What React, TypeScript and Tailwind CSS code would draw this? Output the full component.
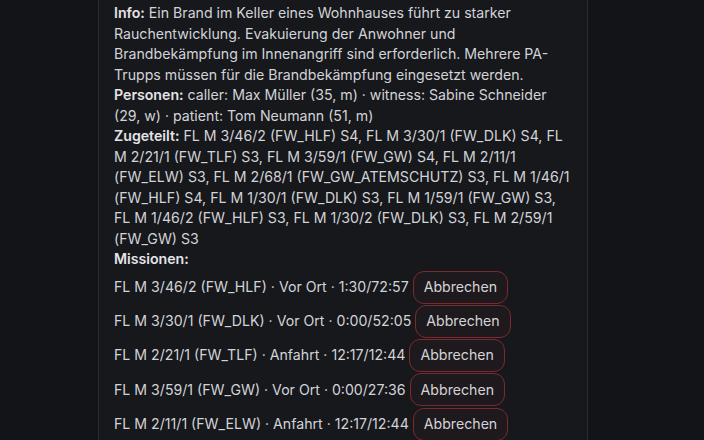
import React from 'react';

const missions = [
  { unit: 'FL M 3/46/2 (FW_HLF)', status: 'Vor Ort', time: '1:30/72:57' },
  { unit: 'FL M 3/30/1 (FW_DLK)', status: 'Vor Ort', time: '0:00/52:05' },
  { unit: 'FL M 2/21/1 (FW_TLF)', status: 'Anfahrt', time: '12:17/12:44' },
  { unit: 'FL M 3/59/1 (FW_GW)', status: 'Vor Ort', time: '0:00/27:36' },
  { unit: 'FL M 2/11/1 (FW_ELW)', status: 'Anfahrt', time: '12:17/12:44' },
];

export default function App() {
  return (
    <div
      className="h-[440px] w-[704px] overflow-hidden bg-[#131418] text-[14.15px] leading-[20.5px] text-[#d2d3d7]"
      style={{ fontFamily: 'Inter, "Noto Sans", sans-serif' }}
    >
      <div className="ml-[98px] h-full w-[490px] border-x border-[#2a2b30] bg-[#17181c] px-[15px] pt-[3px]">
        <p>
          <span className="font-semibold text-[#e4e4e7]">Info:</span> Ein Brand im Keller eines Wohnhauses führt zu starker
          Rauchentwicklung. Evakuierung der Anwohner und Brandbekämpfung im Innenangriff sind erforderlich. Mehrere PA-
          Trupps müssen für die Brandbekämpfung eingesetzt werden.
        </p>
        <p>
          <span className="font-semibold text-[#e4e4e7]">Personen:</span> caller: Max Müller (35, m) · witness: Sabine Schneider
          (29, w) · patient: Tom Neumann (51, m)
        </p>
        <p>
          <span className="font-semibold text-[#e4e4e7]">Zugeteilt:</span> FL M 3/46/2 (FW_HLF) S4, FL M 3/30/1 (FW_DLK) S4, FL
          M 2/21/1 (FW_TLF) S3, FL M 3/59/1 (FW_GW) S4, FL M 2/11/1 (FW_ELW) S3, FL M 2/68/1 (FW_GW_ATEMSCHUTZ) S3, FL M 1/46/1
          (FW_HLF) S4, FL M 1/30/1 (FW_DLK) S3, FL M 1/59/1 (FW_GW) S3, FL M 1/46/2 (FW_HLF) S3, FL M 1/30/2 (FW_DLK) S3, FL M
          2/59/1 (FW_GW) S3
        </p>
        <p className="font-semibold text-[#e4e4e7]">Missionen:</p>
        <ul className="mt-[1px] flex flex-col gap-[1.3px]">
          {missions.map((m) => (
            <li key={m.unit} className="flex items-center gap-[4px]">
              <span>
                {m.unit} · {m.status} · {m.time}
              </span>
              <button className="h-[33px] rounded-[11px] border border-[#7a2a31] bg-[#1e191c] px-[10px] text-[#d2d3d7]">
                Abbrechen
              </button>
            </li>
          ))}
        </ul>
      </div>
    </div>
  );
}
